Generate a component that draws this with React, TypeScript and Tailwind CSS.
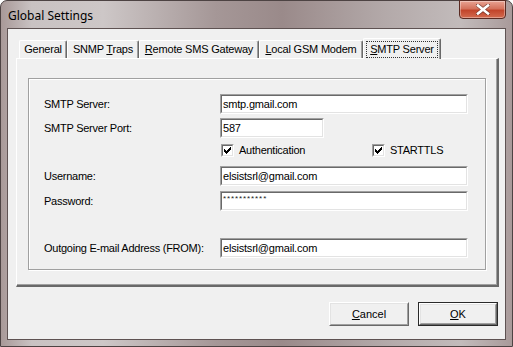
import React from "react";

const font = { fontFamily: '"Liberation Sans", Arial, sans-serif' };

function Field({ value, width, password }: { value: string; width: string; password?: boolean }) {
  return (
    <div className={`${width} h-[20px] flex border border-t-[#a0a0a0] border-l-[#a0a0a0] border-r-white border-b-white`}>
      <div className="flex-1 flex border border-t-[#696969] border-l-[#696969] border-r-[#e3e3e3] border-b-[#e3e3e3] bg-white pl-[1px]">
        {password ? (
          <span className="text-[8px] leading-[10px] mt-[1px] tracking-[0.9px] text-[#222]">{value}</span>
        ) : (
          <span className="text-[11px] leading-[16px] tracking-[-0.2px] text-black">{value}</span>
        )}
      </div>
    </div>
  );
}

function CheckBox() {
  return (
    <span className="w-[13px] h-[13px] flex border border-t-[#a0a0a0] border-l-[#a0a0a0] border-r-white border-b-white">
      <span className="flex-1 flex items-center justify-center bg-white border border-t-[#696969] border-l-[#696969] border-r-[#e3e3e3] border-b-[#e3e3e3]">
        <svg width="7" height="7" viewBox="0 0 7 7" shapeRendering="crispEdges">
          <path d="M6 0h1v1h-1zM5 1h2v1h-2zM0 2h1v1h-1zM4 2h3v1h-3zM0 3h2v1h-2zM3 3h3v1h-3zM0 4h5v1h-5zM1 5h3v1h-3zM2 6h1v1h-1z" fill="#000" />
        </svg>
      </span>
    </span>
  );
}

function Tab({ children, width }: { children: React.ReactNode; width: string }) {
  return (
    <div className={`${width} h-[18px] flex items-center justify-center border-t border-l border-white border-r border-r-[#696969] rounded-t-[2px] bg-[#f0f0f0] text-[11px] tracking-[-0.2px] text-black shadow-[inset_-1px_0_0_#a0a0a0]`}>
      {children}
    </div>
  );
}

function Button({ children, isDefault }: { children: React.ReactNode; isDefault?: boolean }) {
  return (
    <div className={`w-[80px] h-[24px] flex ${isDefault ? "border border-[#2a2a2a]" : ""}`}>
      <div className="flex-1 flex border border-t-white border-l-white border-r-[#696969] border-b-[#696969]">
        <div className="flex-1 flex items-center justify-center bg-[#f0f0f0] border border-t-[#e3e3e3] border-l-[#e3e3e3] border-r-[#a0a0a0] border-b-[#a0a0a0] text-[11px] text-black">
          {children}
        </div>
      </div>
    </div>
  );
}

export default function App() {
  return (
    <div className="w-[513px] h-[347px] bg-white" style={font}>
      <div className="w-[513px] h-[347px] flex flex-col rounded-t-[7px] border border-[#4d4343] bg-[linear-gradient(90deg,#a89998_0%,#c9c2c2_6%,#cdc7c7_20%,#a59797_42%,#9a8a8a_55%,#b3a9a9_75%,#c2bbbb_90%,#a99a9a_100%)]">
        {/* Title bar */}
        <div className="h-[27px] flex items-start justify-between pl-[7px] pr-[6px]">
          <span className="mt-[6px] text-[12px] text-black" style={{ fontFamily: '"Noto Sans", "Liberation Sans", sans-serif' }}>
            Global Settings
          </span>
          <div className="w-[47px] h-[19px] -mt-[1px] flex items-center justify-center rounded-b-[4px] border border-[#5a2a22] bg-[linear-gradient(180deg,#e9a393_0%,#d4725c_45%,#c2452b_55%,#d36b4f_100%)] shadow-[inset_0_0_0_1px_rgba(255,255,255,0.35)]">
            <svg width="14" height="11" viewBox="0 0 14 11">
              <path d="M1.5 1 L12.5 10 M12.5 1 L1.5 10" stroke="#3a1a14" strokeWidth="4" strokeLinecap="square" opacity="0.55" />
              <path d="M2 1.5 L12 9.5 M12 1.5 L2 9.5" stroke="#fff" strokeWidth="2.6" strokeLinecap="square" />
            </svg>
          </div>
        </div>

        {/* Client area */}
        <div className="flex-1 mx-[6px] mb-[6px] flex flex-col border border-[#5e5252] bg-[#f0f0f0] pt-[9px] pl-[8px] pr-[6px]">
          {/* Tabs */}
          <div className="h-[20px] flex items-end ml-[3px]">
            <Tab width="w-[48px]">General</Tab>
            <Tab width="w-[72px]">
              <span>SNMP <span className="underline underline-offset-1">T</span>raps</span>
            </Tab>
            <Tab width="w-[120px]">
              <span><span className="underline underline-offset-1">R</span>emote SMS Gateway</span>
            </Tab>
            <Tab width="w-[104px]">
              <span><span className="underline underline-offset-1">L</span>ocal GSM Modem</span>
            </Tab>
            <div className="relative z-10 -mb-[1px] w-[78px] h-[21px] flex items-start justify-center pt-[2px] px-[2px] border-t border-l border-white border-r border-r-[#696969] rounded-t-[2px] bg-[#f0f0f0] text-[11px] tracking-[-0.2px] text-black shadow-[inset_-1px_0_0_#a0a0a0]">
              <span className="w-full h-[17px] flex items-center justify-center border border-dotted border-[#333]">
                <span><span className="underline underline-offset-1">S</span>MTP Server</span>
              </span>
            </div>
          </div>

          {/* Tab panel */}
          <div className="h-[229px] flex flex-col border-t border-l border-white border-r-2 border-b-2 border-r-[#696969] border-b-[#696969] shadow-[inset_-1px_-1px_0_#a0a0a0] pt-[19px] pl-[11px] pr-[11px]">
            <div className="flex flex-col border border-[#a0a0a0] shadow-[inset_1px_1px_0_#fff,1px_1px_0_#fff] pt-[15px] pb-[11px] pl-[15px] text-[11px] tracking-[-0.25px] text-black">
              <div className="h-[20px] flex items-center">
                <span className="w-[176px]">SMTP Server:</span>
                <Field value="smtp.gmail.com" width="w-[248px]" />
              </div>
              <div className="h-[20px] mt-[4px] flex items-center">
                <span className="w-[176px]">SMTP Server Port:</span>
                <Field value="587" width="w-[104px]" />
              </div>
              <div className="h-[13px] mt-[6px] flex items-center pl-[177px]">
                <CheckBox />
                <span className="ml-[5px] w-[133px]">Authentication</span>
                <CheckBox />
                <span className="ml-[5px]">STARTTLS</span>
              </div>
              <div className="h-[20px] mt-[9px] flex items-center">
                <span className="w-[176px]">Username:</span>
                <Field value="elsistsrl@gmail.com" width="w-[248px]" />
              </div>
              <div className="h-[20px] mt-[5px] flex items-center">
                <span className="w-[176px]">Password:</span>
                <Field value="***********" width="w-[248px]" password />
              </div>
              <div className="h-[20px] mt-[27px] flex items-center">
                <span className="w-[176px]">Outgoing E-mail Address (FROM):</span>
                <Field value="elsistsrl@gmail.com" width="w-[248px]" />
              </div>
            </div>
          </div>

          {/* Buttons */}
          <div className="mt-[15px] flex justify-end gap-[9px] pr-[1px]">
            <Button>
              <span><span className="underline underline-offset-1">C</span>ancel</span>
            </Button>
            <Button isDefault>
              <span><span className="underline underline-offset-1">O</span>K</span>
            </Button>
          </div>
        </div>
      </div>
    </div>
  );
}
